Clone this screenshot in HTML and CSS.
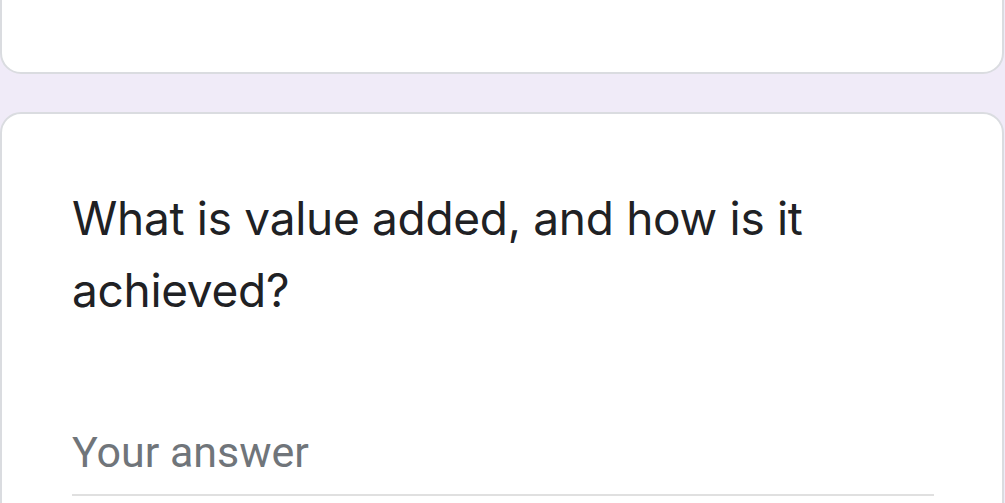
FILE: index.html
```html
<!DOCTYPE html>
<html lang="en">
<head>
  <meta charset="UTF-8" />
  <meta name="viewport" content="width=device-width, initial-scale=1.0"/>
  <title>Form</title>
  <link rel="stylesheet" href="styles.css">
</head>
<body>

<div class="form">
  <div class="card card-top"></div>

  <div class="card question">
    <div class="question-title">What is value added, and how is it achieved?</div>
    <div class="answer">
      <input class="answer-input" type="text" placeholder="Your answer">
    </div>
  </div>
</div>

</body>
</html>
```

FILE: styles.css
```css
body {
  margin: 0;
  padding: 0;
  background: #f0ebf8;
  font-family: Roboto, "Liberation Sans", sans-serif;
  color: #202124;
  overflow: hidden;
}
.form {
  display: flex;
  flex-direction: column;
  gap: 38px;
  padding-right: 1px;
  margin-top: -60px;
}
.card {
  background: #fff;
  border: 2px solid #dadce0;
  border-radius: 21px;
}
.card-top {
  height: 130px;
}
.question {
  padding: 68px 68px 40px 70px;
}
.question-title {
  font-family: Inter, Roboto, sans-serif;
  font-size: 46px;
  line-height: 72px;
  letter-spacing: -0.3px;
}
.answer {
  margin-top: 101px;
}
.answer-input {
  width: 100%;
  box-sizing: border-box;
  border: none;
  border-bottom: 2px solid #e0e0e0;
  padding: 0 0 17px 0;
  font-family: Roboto, sans-serif;
  font-size: 43px;
  color: #202124;
  outline: none;
  background: transparent;
}
.answer-input::placeholder {
  color: #70757a;
}
```
